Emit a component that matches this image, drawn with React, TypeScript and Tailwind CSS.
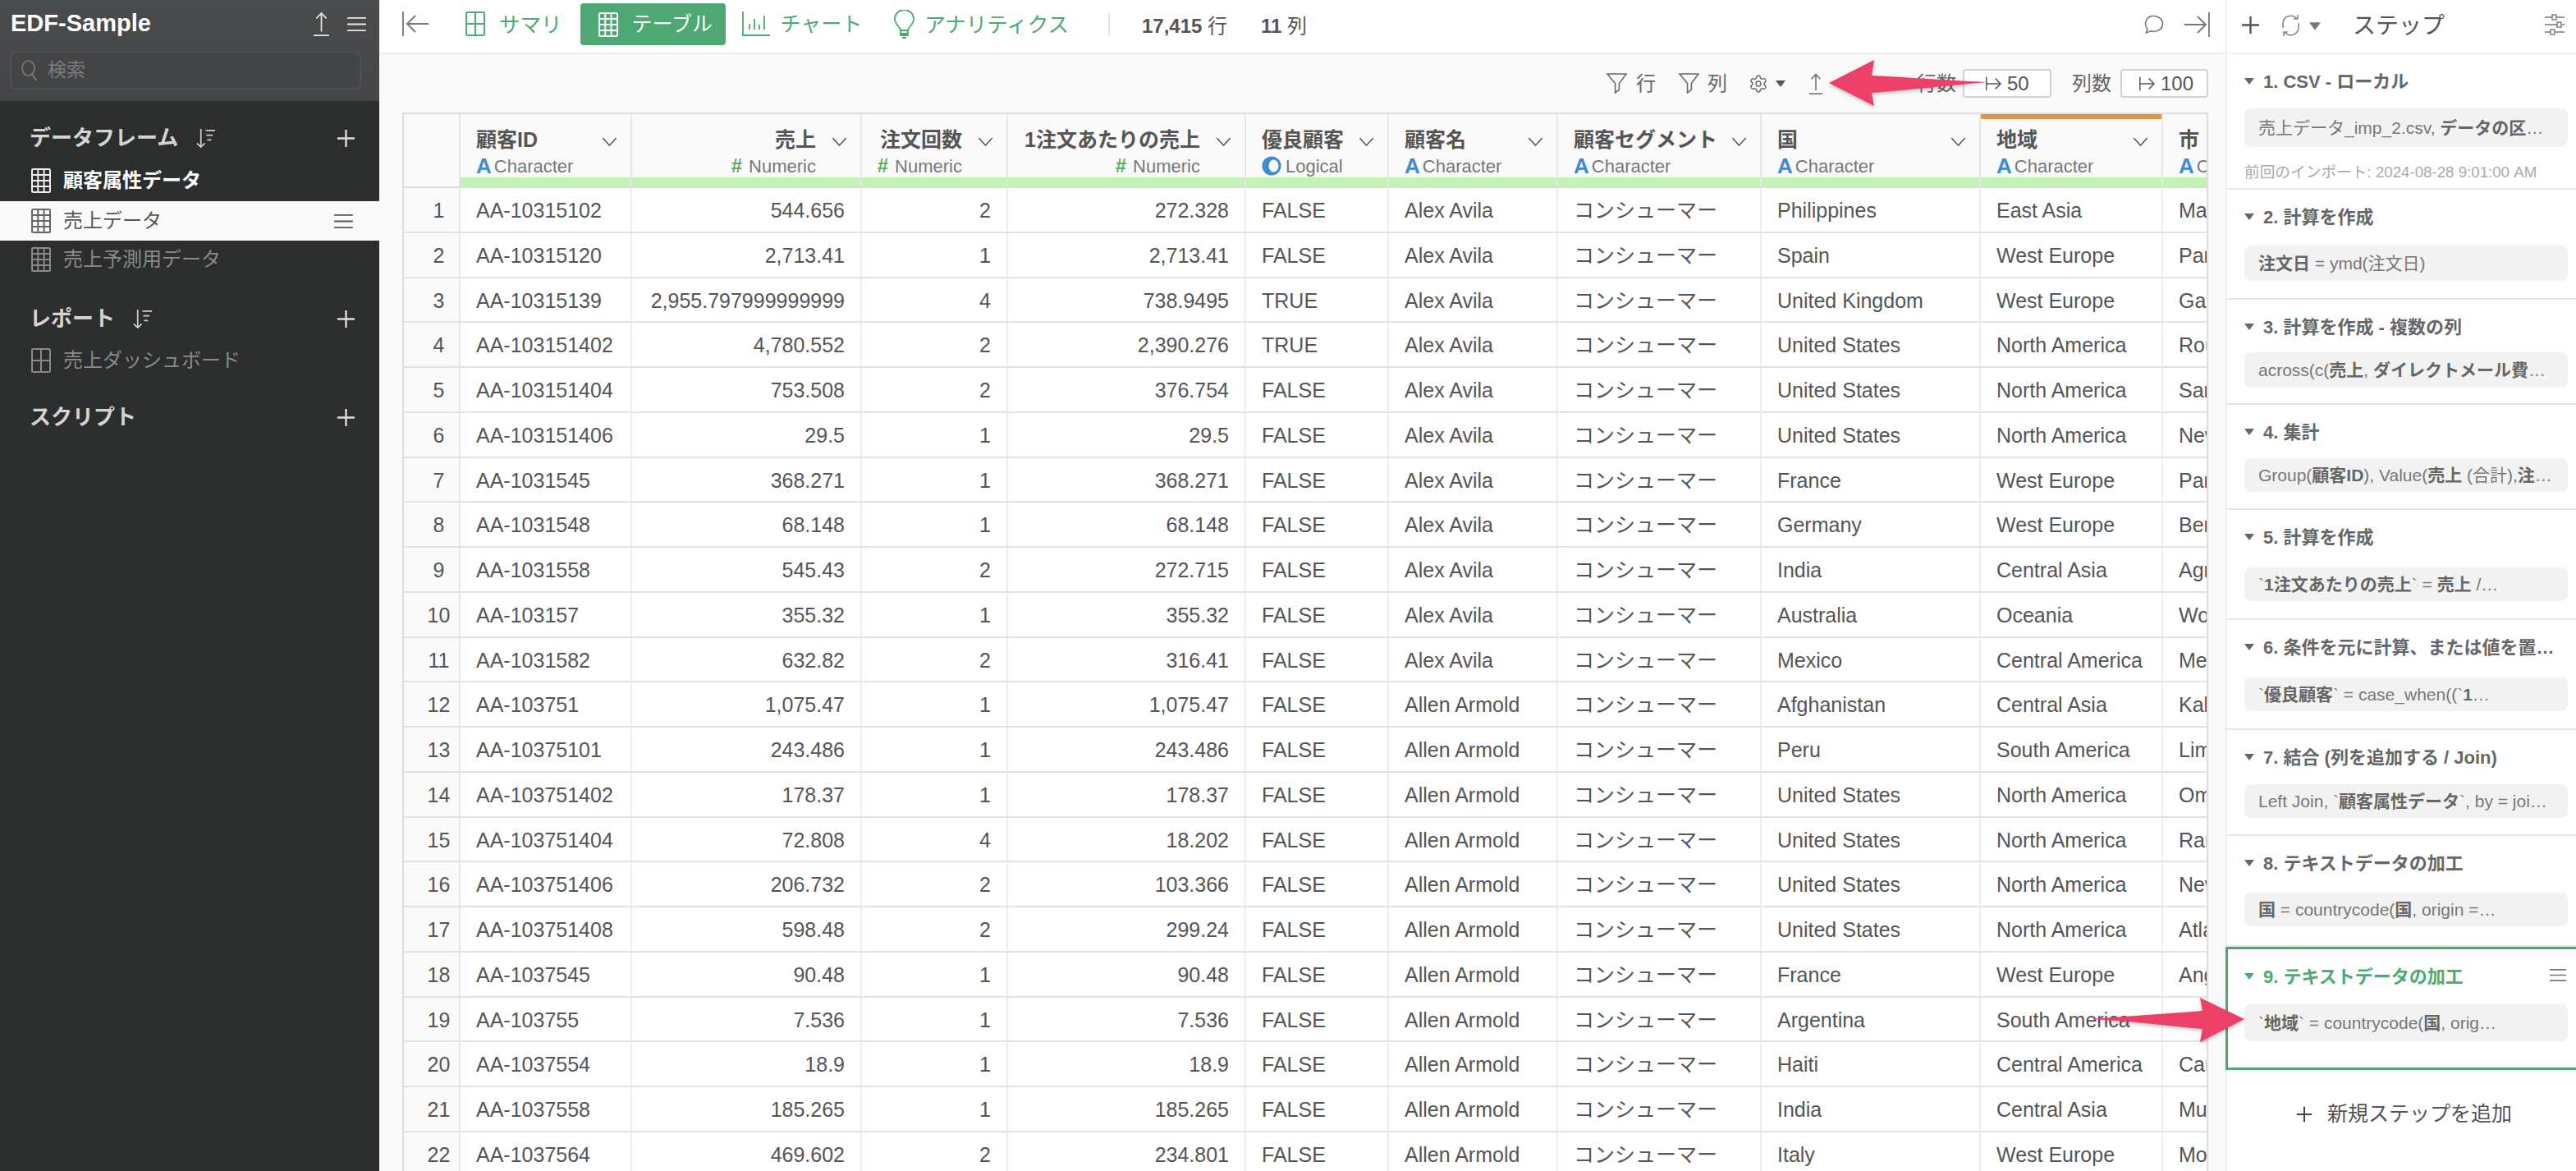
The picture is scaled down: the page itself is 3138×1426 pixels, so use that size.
import React from "react";
import { Settings } from "lucide-react";

type IconProps = { className?: string };

const Svg = ({ className, vb, children, sw = 2 }: { className?: string; vb: string; children: React.ReactNode; sw?: number }) => (
  <svg className={className} viewBox={vb} fill="none" stroke="currentColor" strokeWidth={sw}>
    {children}
  </svg>
);

const TableIcon = ({ className }: IconProps) => (
  <Svg className={className} vb="0 0 24 30" sw={2}>
    <rect x="1" y="1" width="22" height="28" rx="1.5" />
    <path d="M1 8h22M1 15h22M1 22h22M8.3 1v28M15.6 1v28" />
  </Svg>
);
const PaneIcon = ({ className }: IconProps) => (
  <Svg className={className} vb="0 0 24 30" sw={2}>
    <rect x="1" y="1" width="22" height="28" rx="1.5" />
    <path d="M1 15h22M12 1v28" />
  </Svg>
);
const Burger = ({ className }: IconProps) => (
  <Svg className={className} vb="0 0 24 20" sw={2}>
    <path d="M0 2h24M0 10h24M0 18h24" />
  </Svg>
);
const Plus = ({ className }: IconProps) => (
  <Svg className={className} vb="0 0 24 24" sw={2.5}>
    <path d="M12 1v22M1 12h22" />
  </Svg>
);
const Upload = ({ className }: IconProps) => (
  <Svg className={className} vb="0 0 20 32" sw={1.8}>
    <path d="M10 26V2M3.5 9L10 2l6.5 7M0 31h20" />
  </Svg>
);
const SortIcon = ({ className }: IconProps) => (
  <Svg className={className} vb="0 0 26 26" sw={1.8}>
    <path d="M7 1v23M2 19l5 5 5-5M13 3h12M14 9h8M15 15h5" />
  </Svg>
);
const Chevron = ({ className }: IconProps) => (
  <Svg className={className} vb="0 0 20 12" sw={1.6}>
    <path d="M1 1l9 10 9-10" />
  </Svg>
);
const Funnel = ({ className }: IconProps) => (
  <Svg className={className} vb="0 0 26 26" sw={1.6}>
    <path d="M1 1h24l-9 12v8l-5 4V13z" />
  </Svg>
);
const ToBox = ({ className }: IconProps) => (
  <Svg className={className} vb="0 0 22 22" sw={1.6}>
    <path d="M2 2v18M2 11h18M14 4l7 7-7 7" />
  </Svg>
);

const LogicalIcon = () => (
  <svg className="h-[24px] w-[24px] mr-[5px]" viewBox="0 0 24 24">
    <circle cx="12" cy="12" r="11.5" fill="#3f8ad2" />
    <ellipse cx="14.5" cy="12" rx="6" ry="7.5" fill="#fafafa" />
  </svg>
);

const Caret = ({ className }: IconProps) => (
  <svg className={className} viewBox="0 0 12 8" fill="currentColor">
    <path d="M0 0h12L6 8z" />
  </svg>
);

type Col = { t: string; ty: "c" | "n" | "l"; w: string; right?: boolean; orange?: boolean };
const cols: Col[] = [
  { t: "顧客ID", ty: "c", w: "w-[209px]" },
  { t: "売上", ty: "n", w: "w-[280px]", right: true },
  { t: "注文回数", ty: "n", w: "w-[178px]", right: true },
  { t: "1注文あたりの売上", ty: "n", w: "w-[290px]", right: true },
  { t: "優良顧客", ty: "l", w: "w-[174px]" },
  { t: "顧客名", ty: "c", w: "w-[206px]" },
  { t: "顧客セグメント", ty: "c", w: "w-[248px]" },
  { t: "国", ty: "c", w: "w-[267px]" },
  { t: "地域", ty: "c", w: "w-[222px]", orange: true },
  { t: "市", ty: "c", w: "w-[55px]" },
];

const AA = "Alex Avila";
const AL = "Allen Armold";
const C = "コンシューマー";
const US = "United States";
const NA = "North America";
const WE = "West Europe";
const CA = "Central Asia";
const rows: string[][] = [
  ["AA-10315102", "544.656", "2", "272.328", "FALSE", AA, C, "Philippines", "East Asia", "Manila"],
  ["AA-10315120", "2,713.41", "1", "2,713.41", "FALSE", AA, C, "Spain", WE, "Paris"],
  ["AA-10315139", "2,955.797999999999", "4", "738.9495", "TRUE", AA, C, "United Kingdom", WE, "Gar"],
  ["AA-103151402", "4,780.552", "2", "2,390.276", "TRUE", AA, C, US, NA, "Rou"],
  ["AA-103151404", "753.508", "2", "376.754", "FALSE", AA, C, US, NA, "San"],
  ["AA-103151406", "29.5", "1", "29.5", "FALSE", AA, C, US, NA, "New"],
  ["AA-1031545", "368.271", "1", "368.271", "FALSE", AA, C, "France", WE, "Paris"],
  ["AA-1031548", "68.148", "1", "68.148", "FALSE", AA, C, "Germany", WE, "Berlin"],
  ["AA-1031558", "545.43", "2", "272.715", "FALSE", AA, C, "India", CA, "Agra"],
  ["AA-103157", "355.32", "1", "355.32", "FALSE", AA, C, "Australia", "Oceania", "Wo"],
  ["AA-1031582", "632.82", "2", "316.41", "FALSE", AA, C, "Mexico", "Central America", "Me"],
  ["AA-103751", "1,075.47", "1", "1,075.47", "FALSE", AL, C, "Afghanistan", CA, "Kabul"],
  ["AA-10375101", "243.486", "1", "243.486", "FALSE", AL, C, "Peru", "South America", "Lima"],
  ["AA-103751402", "178.37", "1", "178.37", "FALSE", AL, C, US, NA, "Omaha"],
  ["AA-103751404", "72.808", "4", "18.202", "FALSE", AL, C, US, NA, "Rar"],
  ["AA-103751406", "206.732", "2", "103.366", "FALSE", AL, C, US, NA, "New"],
  ["AA-103751408", "598.48", "2", "299.24", "FALSE", AL, C, US, NA, "Atlanta"],
  ["AA-1037545", "90.48", "1", "90.48", "FALSE", AL, C, "France", WE, "Angers"],
  ["AA-103755", "7.536", "1", "7.536", "FALSE", AL, C, "Argentina", "South America", "San"],
  ["AA-1037554", "18.9", "1", "18.9", "FALSE", AL, C, "Haiti", "Central America", "Car"],
  ["AA-1037558", "185.265", "1", "185.265", "FALSE", AL, C, "India", CA, "Mumbai"],
  ["AA-1037564", "469.602", "2", "234.801", "FALSE", AL, C, "Italy", WE, "Modena"],
];

const TypeLine = ({ ty }: { ty: Col["ty"] }) => (
  <div className="flex items-center h-[26px] text-[22px] text-[#777]">
    {ty === "c" && <span className="font-bold text-[#3f8ad2] text-[26px] mr-[3px]">A</span>}
    {ty === "n" && <span className="font-bold text-[#5cab5c] text-[24px] mr-[8px]">#</span>}
    {ty === "l" && <LogicalIcon />}
    <span className="whitespace-nowrap">{ty === "c" ? "Character" : ty === "n" ? "Numeric" : "Logical"}</span>
  </div>
);

const HeaderCell = ({ c }: { c: Col }) => (
  <div className={`${c.w} shrink-0 relative border-r-2 border-[#e6e6e6] last:border-r-0 overflow-hidden flex flex-col bg-[#fafafa]`}>
    {c.orange && <div className="absolute left-0 right-0 top-0 h-[6px] bg-[#e0944a]" />}
    <div className={`flex-1 flex flex-col pt-[16px] ${c.right ? "items-end pr-[54px]" : "items-start pl-[19px]"}`}>
      <div className="h-[32px] flex items-center text-[25px] font-bold text-[#555] whitespace-nowrap">{c.t}</div>
      <div className="mt-[2px]">
        <TypeLine ty={c.ty} />
      </div>
    </div>
    {c.t !== "市" && <Chevron className="absolute right-[16px] top-[28px] w-[19px] h-[11px] text-[#555]" />}
    <div className="h-[11px] bg-[#c2f3b4]" />
  </div>
);

const Row = ({ i, r }: { i: number; r: string[] }) => (
  <div className="flex h-[54.76px] shrink-0 border-b-2 border-[#e2e2e2] text-[25px] text-[#555]">
    <div className="w-[69px] shrink-0 bg-[#fafafa] border-r-2 border-[#e6e6e6] flex items-center justify-center pl-[18px] pt-[3px]">{i + 1}</div>
    {r.map((v, j) => (
      <div
        key={j}
        className={`${cols[j].w} shrink-0 flex items-center overflow-hidden whitespace-nowrap bg-white pt-[3px] ${j < 9 ? "border-r-2 border-[#eeeeee]" : ""} ${cols[j].right ? "justify-end pr-[19px]" : "pl-[19px]"}`}
      >
        {v}
      </div>
    ))}
  </div>
);

const B = ({ children }: { children: React.ReactNode }) => <b className="font-bold text-[#666]">{children}</b>;

type Step = { t: string; h: string; gap: string; pill: string; c: React.ReactNode; note?: string };
const steps: Step[] = [
  {
    t: "1. CSV - ローカル",
    h: "h-[165px]",
    gap: "mt-[20px]",
    pill: "h-[47px]",
    c: <>売上データ_imp_2.csv, <B>データの区</B>…</>,
    note: "前回のインポート: 2024-08-28 9:01:00 AM",
  },
  { t: "2. 計算を作成", h: "h-[134px]", gap: "mt-[22px]", pill: "h-[43px]", c: <><B>注文日</B> = ymd(注文日)</> },
  { t: "3. 計算を作成 - 複数の列", h: "h-[128px]", gap: "mt-[18px]", pill: "h-[43px]", c: <>across(c(<B>売上</B>, <B>ダイレクトメール費</B>…</> },
  { t: "4. 集計", h: "h-[128px]", gap: "mt-[19px]", pill: "h-[41px]", c: <>Group(<B>顧客ID</B>), Value(<B>売上</B> (合計),<B>注</B>…</> },
  { t: "5. 計算を作成", h: "h-[134px]", gap: "mt-[24px]", pill: "h-[41px]", c: <>`<B>1注文あたりの売上</B>` = <B>売上</B> /…</> },
  { t: "6. 条件を元に計算、または値を置…", h: "h-[134px]", gap: "mt-[24px]", pill: "h-[41px]", c: <>`<B>優良顧客</B>` = case_when((`<B>1</B>…</> },
  { t: "7. 結合 (列を追加する / Join)", h: "h-[129px]", gap: "mt-[20px]", pill: "h-[41px]", c: <>Left Join, `<B>顧客属性データ</B>`, by = joi…</> },
  { t: "8. テキストデータの加工", h: "h-[135px]", gap: "mt-[23px]", pill: "h-[41px]", c: <><B>国</B> = countrycode(<B>国</B>, origin =…</> },
];

const StepHead = ({ t, green }: { t: string; green?: boolean }) => (
  <div className={`flex items-center h-[28px] mt-[18px] pt-[2px] text-[22px] font-bold whitespace-nowrap ${green ? "text-[#4caa72]" : "text-[#666]"}`}>
    <Caret className="w-[12px] h-[8px] mr-[11px]" />
    {t}
  </div>
);

const Pill = ({ h, gap, children }: { h: string; gap: string; children: React.ReactNode }) => (
  <div className={`${h} ${gap} w-[394px] rounded-[8px] bg-[#f2f2f2] pl-[17px] flex items-center text-[21px] text-[#777] whitespace-nowrap overflow-hidden`}>
    <span>{children}</span>
  </div>
);

const Sidebar = () => (
  <aside className="w-[462px] shrink-0 bg-[#2c2e2e] flex flex-col">
    <div className="h-[123px] bg-gradient-to-b from-[#4a4b4d] to-[#444547] px-[12px] pt-[8px]">
      <div className="flex items-center h-[42px] text-white">
        <span className="text-[29px] font-bold ml-[1px]">EDF-Sample</span>
        <Upload className="ml-auto w-[19px] h-[30px] text-[#e8e8e8]" />
        <Burger className="ml-[22px] mr-[4px] w-[23px] h-[19px] text-[#e8e8e8]" />
      </div>
      <div className="mt-[12px] h-[47px] w-[428px] rounded-[8px] border-2 border-[#505153] bg-[#434446] flex items-center pl-[12px] text-[23px] text-[#7c7c7c]">
        <Svg className="w-[19px] h-[26px] mr-[13px]" vb="0 0 19 26" sw={1.6}>
          <ellipse cx="8.5" cy="10" rx="7.5" ry="9" />
          <path d="M13 17l5 8" />
        </Svg>
        検索
      </div>
    </div>
    <div className="mt-[29px] pl-[36px] pr-[29px] h-[32px] flex items-center text-[26px] font-bold text-[#d4d4d4]">
      データフレーム
      <SortIcon className="ml-[21px] w-[25px] h-[25px] text-[#cfcfcf]" />
      <Plus className="ml-auto w-[23px] h-[23px] text-[#dddddd]" />
    </div>
    <div className="mt-[18px] h-[36px] pl-[38px] flex items-center text-[24px] font-bold text-white">
      <TableIcon className="w-[24px] h-[30px] mr-[15px] text-[#eeeeee]" />
      顧客属性データ
    </div>
    <div className="mt-[7px] h-[48px] bg-[#fafafa] pl-[38px] pr-[32px] flex items-center text-[24px] text-[#555]">
      <TableIcon className="w-[24px] h-[30px] mr-[15px] text-[#666]" />
      売上データ
      <Burger className="ml-auto w-[23px] h-[19px] text-[#555]" />
    </div>
    <div className="mt-[5px] h-[36px] pl-[38px] flex items-center text-[24px] text-[#8a8a8a]">
      <TableIcon className="w-[24px] h-[30px] mr-[15px]" />
      売上予測用データ
    </div>
    <div className="mt-[38px] pl-[36px] pr-[29px] h-[32px] flex items-center text-[26px] font-bold text-[#d4d4d4]">
      レポート
      <SortIcon className="ml-[21px] w-[25px] h-[25px] text-[#cfcfcf]" />
      <Plus className="ml-auto w-[23px] h-[23px] text-[#dddddd]" />
    </div>
    <div className="mt-[17px] h-[36px] pl-[38px] flex items-center text-[24px] text-[#8a8a8a]">
      <PaneIcon className="w-[24px] h-[30px] mr-[15px]" />
      売上ダッシュボード
    </div>
    <div className="mt-[35px] pl-[36px] pr-[29px] h-[32px] flex items-center text-[26px] font-bold text-[#d4d4d4]">
      スクリプト
      <Plus className="ml-auto w-[23px] h-[23px] text-[#dddddd]" />
    </div>
  </aside>
);

const TopBar = () => (
  <div className="h-[66px] shrink-0 bg-white border-b-2 border-[#eeeeee] flex items-center pl-[28px] text-[25px] text-[#4caa72]">
    <Svg className="w-[33px] h-[30px] text-[#777] -mt-[6px]" vb="0 0 33 30" sw={1.8}>
      <path d="M1 0v30M32 15H7M16 5L6 15l10 10" />
    </Svg>
    <PaneIcon className="ml-[39px] w-[34px] h-[30px] -mt-[6px]" />
    <span className="ml-[12px] -mt-[4px] text-[25.500px]">サマリ</span>
    <div className="ml-[22px] w-[177px] h-[51px] -mt-[5px] rounded-[4px] bg-[#4da873] text-white flex items-center pl-[17px]">
      <TableIcon className="w-[34px] h-[30px]" />
      <span className="ml-[12px] mt-[1px]">テーブル</span>
    </div>
    <Svg className="ml-[20px] w-[34px] h-[30px] -mt-[6px]" vb="0 0 34 30" sw={1.8}>
      <path d="M1 0v29h33M9 22v-7M15 22V9M21 22v-6M27 22V5" />
    </Svg>
    <span className="ml-[13px] -mt-[4px]">チャート</span>
    <Svg className="ml-[39px] w-[25px] h-[35px] -mt-[6px]" vb="0 0 25 35" sw={1.8}>
      <path d="M8 25c0-4-7-7-7-14a11.5 11 0 0 1 23 0c0 7-7 10-7 14zM8 25v6h9v-6M8 29h9M10 34h5" />
    </Svg>
    <span className="ml-[12px] -mt-[4px] text-[25.500px]">アナリティクス</span>
    <div className="ml-[48px] w-[2px] h-[28px] bg-[#e4e4e4] -mt-[4px]" />
    <div className="ml-[39px] text-[24px] text-[#555] whitespace-nowrap">
      <b>17,415</b> 行
    </div>
    <div className="ml-[41px] text-[24px] text-[#555] whitespace-nowrap">
      <b>11</b> 列
    </div>
    <Svg className="ml-auto w-[24px] h-[24px] text-[#777] -mt-[4px]" vb="0 0 24 24" sw={1.6}>
      <path d="M12 1.5a10.5 9.5 0 0 1 0 19c-1.4 0-2.8-.3-4-.7L2.5 22l1.3-5A9.5 9.5 0 0 1 12 1.5z" />
    </Svg>
    <Svg className="ml-[24px] mr-[19px] w-[32px] h-[30px] text-[#777] -mt-[4px]" vb="0 0 32 30" sw={1.8}>
      <path d="M31 0v30M1 15h25M17 5l10 10-10 10" />
    </Svg>
  </div>
);

const SubBar = () => (
  <div className="h-[71px] shrink-0 flex items-center justify-end pr-[21px] text-[24px] text-[#666]">
    <Funnel className="w-[25px] h-[25px] text-[#666]" />
    <span className="ml-[11px]">行</span>
    <Funnel className="ml-[28px] w-[25px] h-[25px] text-[#666]" />
    <span className="ml-[10px]">列</span>
    <Settings className="ml-[26px] w-[24px] h-[26px] text-[#666]" strokeWidth={1.4} />
    <Caret className="ml-[9px] w-[12px] h-[8px] text-[#555]" />
    <Upload className="ml-[28px] w-[18px] h-[26px] text-[#666]" />
    <span className="ml-[114px]">行数</span>
    <div className="ml-[8px] w-[108px] h-[35px] rounded-[4px] border-2 border-[#d2d2d2] bg-white flex items-center pl-[25px] text-[#555]">
      <ToBox className="w-[20px] h-[20px] mr-[7px]" />
      50
    </div>
    <span className="ml-[25px]">列数</span>
    <div className="ml-[11px] w-[107px] h-[35px] rounded-[4px] border-2 border-[#d2d2d2] bg-white flex items-center pl-[20px] text-[#555]">
      <ToBox className="w-[20px] h-[20px] mr-[7px]" />
      100
    </div>
  </div>
);

const DataTable = () => (
  <div className="ml-[28px] w-[2200px] flex-1 overflow-hidden border-t-2 border-l-2 border-r-2 border-[#dddddd]">
    <div className="flex h-[90px] w-[2200px] border-b-2 border-[#dcdcdc] bg-[#fafafa]">
      <div className="w-[69px] shrink-0 border-r-2 border-[#e6e6e6]" />
      {cols.map((c) => (
        <HeaderCell key={c.t} c={c} />
      ))}
    </div>
    {rows.map((r, i) => (
      <Row key={i} i={i} r={r} />
    ))}
  </div>
);

const StepsPanel = () => (
  <aside className="w-[427px] shrink-0 bg-white border-l-2 border-[#eeeeee] flex flex-col">
    <div className="h-[66px] shrink-0 border-b-2 border-[#eeeeee] flex items-center pl-[17px] text-[#666]">
      <Plus className="w-[23px] h-[23px] text-[#555] -mt-[4px]" />
      <Svg className="ml-[25px] w-[25px] h-[30px] text-[#888] -mt-[2px]" vb="0 0 25 30" sw={1.6}>
        <path d="M3 18V13a9.500 9.500 0 0 1 17-6M22 12v5a9.500 9.500 0 0 1-17 6M16 7h5V2M9 23H4v5" />
      </Svg>
      <Caret className="ml-[10px] w-[14px] h-[10px] text-[#777]" />
      <span className="ml-[39px] text-[28px] text-[#555] -mt-[1px]">ステップ</span>
      <Svg className="ml-auto mr-[14px] w-[24px] h-[26px] text-[#777] -mt-[4px]" vb="0 0 24 26" sw={1.4}>
        <path d="M0 4h24M0 13h24M0 22h24" />
        <rect x="9" y="1" width="5" height="6" fill="#fff" />
        <rect x="15" y="10" width="5" height="6" fill="#fff" />
        <rect x="7" y="19" width="5" height="6" fill="#fff" />
      </Svg>
    </div>
    {steps.map((s) => (
      <div key={s.t} className={`${s.h} shrink-0 border-b-2 border-[#e6e6e6] pl-[21px] flex flex-col`}>
        <StepHead t={s.t} />
        <Pill h={s.pill} gap={s.gap}>{s.c}</Pill>
        {s.note && <div className="mt-[17px] text-[18.700px] text-[#aaaaaa] whitespace-nowrap">{s.note}</div>}
      </div>
    ))}
    <div className="h-[150px] shrink-0 -ml-[2px] border-[3px] border-r-0 border-[#4da873] pl-[20px] flex flex-col relative">
      <StepHead t="9. テキストデータの加工" green />
      <Burger className="absolute right-[12px] top-[23px] w-[20px] h-[17px] text-[#777]" />
      <Pill h="h-[45px]" gap="mt-[21px]">
        `<B>地域</B>` = countrycode(<B>国</B>, orig…
      </Pill>
    </div>
    <div className="mt-[36px] h-[36px] flex items-center pl-[84px] text-[25px] text-[#555]">
      <Plus className="w-[20px] h-[20px] text-[#444] mr-[18px]" />
      新規ステップを追加
    </div>
  </aside>
);

const Arrows = () => (
  <>
    <svg className="absolute left-[2225px] top-[68px] w-[200px] h-[66px] drop-shadow-[0_2px_2px_rgba(0,0,0,0.25)]" viewBox="0 0 200 66">
      <path
        d="M3 33 L58 5 L55 24 C95 26 150 30 196 32 C150 36 95 42 55 45 L58 61 Z"
        fill="#ec4069"
      />
    </svg>
    <svg className="absolute left-[2540px] top-[1210px] w-[200px] h-[64px] drop-shadow-[0_2px_2px_rgba(0,0,0,0.25)]" viewBox="0 0 200 64">
      <path
        d="M194 31 L140 5 L143 21 C100 24 50 28 7 31 C50 33 100 39 143 43 L140 59 Z"
        fill="#ec4069"
      />
    </svg>
  </>
);

export default function App() {
  return (
    <div className="relative flex h-[1426px] w-[3138px] overflow-hidden bg-white [font-family:Liberation_Sans,Noto_Sans_CJK_JP,sans-serif]">
      <Sidebar />
      <main className="w-[2249px] shrink-0 flex flex-col bg-[#fafafa]">
        <TopBar />
        <SubBar />
        <DataTable />
      </main>
      <StepsPanel />
      <Arrows />
    </div>
  );
}
